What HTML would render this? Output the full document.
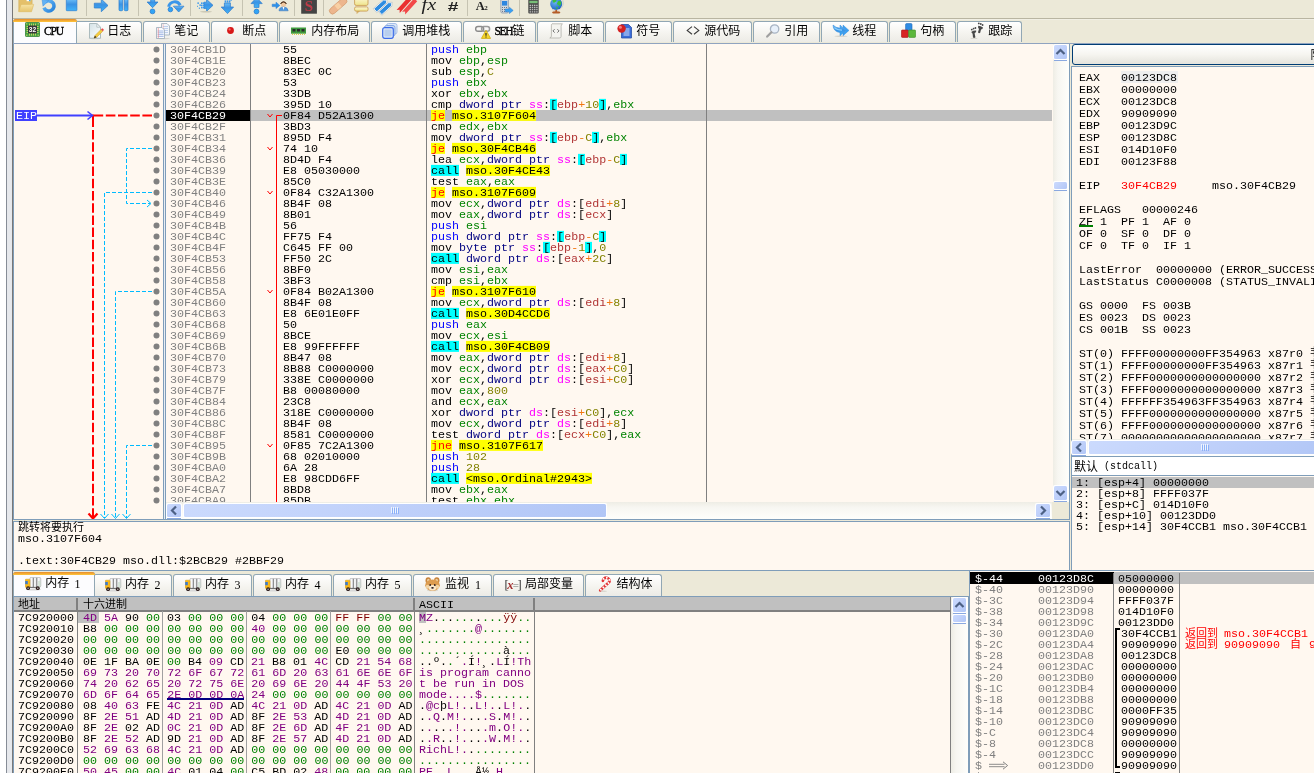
<!DOCTYPE html>
<html><head><meta charset="utf-8"><title>x32dbg</title>
<style>
html,body{margin:0;padding:0}
body{width:1314px;height:773px;overflow:hidden;position:relative;background:#ECE9D8;will-change:transform;font-family:"Liberation Sans",sans-serif}
div,svg.a,span.a{position:absolute;box-sizing:border-box}
.m{font:10px/10px "Liberation Mono",monospace;white-space:pre;transform-origin:0 0;transform:scale(1.16667,1.123);height:10px;color:#000}
.m span{position:static}
.r{}
.ui{font:10px/12px "Liberation Mono",monospace;white-space:pre;color:#000}
.cj{font:12px/12px "Liberation Sans","Noto Sans CJK SC",sans-serif;white-space:pre;color:#000}
.clip{overflow:hidden}
.g{color:#808080}
.tab{border:1px solid #91A7B4;border-bottom:none;border-radius:3px 3px 0 0;background:linear-gradient(#FFFFFF,#F4F3EE 60%,#ECEBE6)}
.tabs{border:1px solid #91A7B4;border-bottom:none;border-radius:3px 3px 0 0;background:#FCFCFE}
.tabs:before{content:"";position:absolute;left:-1px;right:-1px;top:-1px;height:3px;background:linear-gradient(#E68B2C,#FFC73C);border-radius:3px 3px 0 0}
.sb{background:#C4D5FB;border:1px solid #fff;border-radius:2px;box-shadow:inset 0 0 0 1px #B3C8F5, 0 1px 0 #9DB3E5}
.tv{background:linear-gradient(90deg,#EEEDE5,#F7F6F1 30%,#FEFEFB)}
.th{background:linear-gradient(#EEEDE5,#F7F6F1 30%,#FEFEFB)}
/* token colours */
.pp{color:#00F}.cl,.jc,.ad,.sk{background-repeat:no-repeat;background-size:100% 9.8px}.cl{background-image:linear-gradient(#0FF,#0FF)}.jc{color:#F00;background-image:linear-gradient(#FF0,#FF0)}.ad{background-image:linear-gradient(#FF0,#FF0)}
.rg{color:#008300}.vl{color:#828200}.sz{color:#000080}.sg{color:#F0F}
.sk{background-image:linear-gradient(#0FF,#0FF)}.mb{color:#B03434}.op{color:#F27711}
.z{color:#008000}.p{color:#800080}.f{color:#800000}
</style></head><body>
<div style="left:0px;top:0px;width:6px;height:773px;background:#FFFFFF"></div><div style="left:6px;top:0px;width:1px;height:773px;background:#868C96"></div><div style="left:7px;top:0px;width:5px;height:773px;background:#E6E8EC"></div><div style="left:12px;top:0px;width:1px;height:773px;background:#787878"></div><div style="left:13px;top:18px;width:1301px;height:1px;background:#B9B5A2"></div><div style="left:13px;top:19px;width:1301px;height:1px;background:#F1EFE4"></div><div style="left:86px;top:0px;width:1px;height:16px;background:#C6C3B2"></div><div style="left:138px;top:0px;width:1px;height:16px;background:#C6C3B2"></div><div style="left:190px;top:0px;width:1px;height:16px;background:#C6C3B2"></div><div style="left:242px;top:0px;width:1px;height:16px;background:#C6C3B2"></div><div style="left:294px;top:0px;width:1px;height:16px;background:#C6C3B2"></div><div style="left:323px;top:0px;width:1px;height:16px;background:#C6C3B2"></div><div style="left:467px;top:0px;width:1px;height:16px;background:#C6C3B2"></div><div style="left:519px;top:0px;width:1px;height:16px;background:#C6C3B2"></div><svg class="a" style="left:0;top:0" width="600" height="18" viewBox="0 0 600 18"><defs><linearGradient id="bg1" x1="0" y1="0" x2="0" y2="1"><stop offset="0" stop-color="#6EC0F8"/><stop offset=".45" stop-color="#3A92E4"/><stop offset="1" stop-color="#40B4FA"/></linearGradient><linearGradient id="bg2" x1="0" y1="0" x2="1" y2="1"><stop offset="0" stop-color="#6CBCF8"/><stop offset="1" stop-color="#2480DA"/></linearGradient><linearGradient id="fo" x1="0" y1="0" x2="0" y2="1"><stop offset="0" stop-color="#F6E3A4"/><stop offset="1" stop-color="#E6C46C"/></linearGradient><linearGradient id="cm" x1="0" y1="0" x2="0" y2="1"><stop offset="0" stop-color="#FDF8D8"/><stop offset="1" stop-color="#EFE48C"/></linearGradient><radialGradient id="gl" cx=".4" cy=".35" r=".7"><stop offset="0" stop-color="#6CB6F4"/><stop offset="1" stop-color="#1860C0"/></radialGradient></defs><path d="M18.8 11.6V-1h6.6l1.2-1.6h4.6l.9 1.2V4" fill="#E4C06A" stroke="#D2AC58" stroke-width=".6"/><rect x="26.6" y="-.2" width="3.6" height="1.4" fill="#fff"/><rect x="29" y="0" width="1.4" height="1.2" fill="#48B0E8"/><path d="M18.8 11.7L21 4.4h12.7l-2.2 7.3z" fill="url(#fo)" stroke="#DDBA62" stroke-width=".6"/><path d="M45.4 2.2A5.1 5.1 0 1 1 44 7.6" fill="none" stroke="url(#bg2)" stroke-width="3.5"/><path d="M42 -.8L48.8 .4 43 6.2z" fill="#62B2F4" stroke="#3A8CE0" stroke-width=".5"/><rect x="66.3" y="-1" width="10.6" height="11.7" rx=".6" fill="url(#bg1)" stroke="#2C7ED2" stroke-width=".7"/><path d="M94.3 3.2h7V-.9l6.7 6.4-6.7 6.2V8h-7z" fill="url(#bg1)" stroke="#2A78CC" stroke-width=".7"/><rect x="119" y="-1" width="3.7" height="11.7" rx="1" fill="url(#bg1)" stroke="#2A78CC" stroke-width=".7"/><rect x="124.3" y="-1" width="3.7" height="11.7" rx="1" fill="url(#bg1)" stroke="#2A78CC" stroke-width=".7"/><path d="M150.7 -2h4v4h3.3L152.6 7.7 147.1 2h3.6z" fill="url(#bg1)" stroke="#2A78CC" stroke-width=".7"/><circle cx="152.5" cy="11.4" r="2.4" fill="#30A4F6" stroke="#2A7CD0" stroke-width=".8"/><path d="M168.6 6.8a6.2 6.2 0 0 1 11.6-1.6" fill="none" stroke="#3A96EA" stroke-width="3"/><path d="M173.4 6.2h10.6l-5.3 5.8z" fill="url(#bg1)" stroke="#2A78CC" stroke-width=".7"/><circle cx="170.4" cy="9.5" r="2.3" fill="#30A4F6" stroke="#2A7CD0" stroke-width=".8"/><path d="M204 2.2h2.6V-.6l6.4 5.9-6.4 6V8.4H204z" fill="url(#bg1)" stroke="#2A78CC" stroke-width=".7"/><g fill="#3C98EC"><rect x="197.4" y="2.4" width="1.5" height="1.5"/><rect x="199.4" y="4.4" width="1.5" height="1.5"/><rect x="197" y="5.8" width="1" height="1"/><rect x="198.8" y="7.6" width="1.2" height="1.2"/><rect x="201" y="2.4" width="1.6" height="1.6"/><rect x="203" y="2.4" width="1.6" height="1.6"/><rect x="201" y="4.6" width="1.6" height="1.6"/><rect x="203" y="4.6" width="1.6" height="1.6"/><rect x="201" y="6.8" width="1.6" height="1.6"/><rect x="203" y="6.8" width="1.6" height="1.6"/></g><ellipse cx="206" cy="11.8" rx="6" ry=".8" fill="#C9C5B2"/><path d="M224.4 3h6v4h3.2l-6.1 6.6L221.2 7h3.2z" fill="url(#bg1)" stroke="#2A78CC" stroke-width=".7"/><g fill="#3C98EC"><rect x="224.6" y="-1" width="1.6" height="1.6"/><rect x="226.7" y="-1" width="1.6" height="1.6"/><rect x="228.8" y="-1" width="1.6" height="1.6"/><rect x="224.6" y="1" width="1.6" height="1.6"/><rect x="226.7" y="1" width="1.6" height="1.6"/><rect x="228.8" y="1" width="1.6" height="1.6"/><rect x="230.6" y="0" width="1" height="1"/></g><path d="M251 3.6L256.6 -2.4 262.2 3.6H259v3.8h-4.8V3.6z" fill="url(#bg1)" stroke="#2A78CC" stroke-width=".7"/><circle cx="256.5" cy="11.5" r="2.4" fill="#30A4F6" stroke="#2A7CD0" stroke-width=".8"/><path d="M272.2 4.2h3.8V2.2l3.8 3.2-3.8 3.2V6.6h-3.8z" fill="#2E92EA" stroke="#2A78CC" stroke-width=".5"/><circle cx="283.5" cy="4.2" r="2.6" fill="#F0C8A0"/><path d="M280.7 4a2.9 2.9 0 0 1 5.6 0q-.6-2-2.8-2t-2.8 2z" fill="#4A2E1A" stroke="#4A2E1A" stroke-width=".8"/><path d="M279 10.8q.2-3.8 4.5-3.8t4.7 3.8z" fill="#4C96E0" stroke="#3070B8" stroke-width=".5"/><path d="M282.6 7h1.8l-.9 3z" fill="#fff"/><rect x="301.2" y="-2" width="15.7" height="15.7" fill="#444"/><text x="309" y="10.6" text-anchor="middle" font-family='Liberation Serif' font-weight="bold" font-size="15" fill="#BC3C48">S</text><g transform="rotate(-41 338 6)"><rect x="327.6" y="3" width="21" height="6.2" rx="3.1" fill="#EDB68E" stroke="#D29A6E" stroke-width=".7"/><rect x="335.6" y="3.4" width="4.8" height="5.4" fill="#F8D0A4"/></g><rect x="354.6" y="-3" width="13.4" height="8.4" rx="1.6" fill="url(#cm)" stroke="#C8964A" stroke-width=".8"/><path d="M357 11V13.4L359.4 11z" fill="#F4EAA0" stroke="#C8964A" stroke-width=".7"/><rect x="354.6" y="6.9" width="13.4" height="4.2" rx="1.4" fill="url(#cm)" stroke="#C8964A" stroke-width=".8"/><g transform="rotate(-42 384 6)" stroke="#fff" stroke-width=".9" fill="#2E8CE0"><path d="M374.6 1.2h13l2.4 2.2-2.4 2.2h-13z"/><path d="M376.6 6.6h13l2.4 2.2-2.4 2.2h-13z"/></g><g transform="rotate(-42 384 6)" fill="none" stroke="#9AA8B4" stroke-width=".4"><path d="M374.2 .8h13.6l2.8 2.6-2.8 2.6h-13.6z"/><path d="M376.2 6.2h13.6l2.8 2.6-2.8 2.6h-13.6z"/></g><g transform="rotate(-48 407 6)" fill="#EA3030"><path d="M397 1h18.4v4.2H397l2.2-2.1z"/><path d="M399.4 6.2h18v4.2h-18l2.2-2.1z" fill="#F24848"/></g><text x="421.6" y="10" font-family='Liberation Serif' font-style="italic" font-size="16.5" fill="#202020" textLength="14.6" lengthAdjust="spacingAndGlyphs">fx</text><text x="447.6" y="10.8" font-family="Liberation Sans" font-style="italic" font-weight="bold" font-size="13.5" fill="#202020" textLength="10.6" lengthAdjust="spacingAndGlyphs">#</text><text x="475.8" y="10" font-family='Liberation Serif' font-weight="bold" font-size="12.5" fill="#202020">A</text><text x="484.2" y="10" font-family='Liberation Serif' font-weight="bold" font-size="7" fill="#202020">2</text><rect x="500.8" y="-2" width="7.6" height="15" rx="1.4" fill="#D4D8DE" stroke="#8E98A8" stroke-width=".8"/><rect x="502" y="1" width="5.2" height="4.6" fill="#2E86E0"/><path d="M502 7.5h5M502 9.5h5M502 11.4h5" stroke="#6A7484" stroke-width="1" stroke-dasharray="1 1"/><path d="M505.2 9h4.2V7.2l3.8 3.2-3.8 3.2v-1.8h-4.2z" fill="#38A0F4" stroke="#2A78CC" stroke-width=".5"/><rect x="528.3" y="-1" width="10.4" height="14.5" rx="1" fill="#484848"/><rect x="529.4" y=".8" width="8.2" height="2.4" fill="#78BE78"/><path d="M529.6 5.3h8M529.6 7.5h8M529.6 9.7h8M529.6 11.9h8" stroke="#BEBEBE" stroke-width="1.3" stroke-dasharray="1.4 .8"/><circle cx="556.2" cy="4" r="6" fill="url(#gl)"/><path d="M552.6 .2q1.6-1.4 3.4-.8l.6 1.6-1.8 1.4-1.8 .2zM558 1.2l2.2-.4 1.2 1.8-.6 2.2-1.4 1.4-1-1.4-1.6-.6zM556.4 6.6l1.4 .6-.4 1.6-1 .2z" fill="#3CC03C"/><path d="M561.6 -1.6a7.4 7.4 0 0 1-9.6 11" fill="none" stroke="#C8C8C8" stroke-width=".9"/><ellipse cx="556.2" cy="12.4" rx="4.1" ry="1.2" fill="#B45C28"/><rect x="555.4" y="10" width="1.6" height="2" fill="#B45C28"/></svg><div class="tab" style="left:74px;top:21px;width:68px;height:21px;"></div><div class="cj" style="left:107.3px;top:24.8px">日志</div><div class="tab" style="left:143px;top:21px;width:67px;height:21px;"></div><div class="cj" style="left:174.3px;top:24.8px">笔记</div><div class="tab" style="left:211px;top:21px;width:67px;height:21px;"></div><div class="cj" style="left:242.3px;top:24.8px">断点</div><div class="tab" style="left:279px;top:21px;width:91px;height:21px;"></div><div class="cj" style="left:311.3px;top:24.8px">内存布局</div><div class="tab" style="left:371px;top:21px;width:91px;height:21px;"></div><div class="cj" style="left:402.3px;top:24.8px">调用堆栈</div><div class="tab" style="left:463px;top:21px;width:73px;height:21px;"></div><div class="tab" style="left:537px;top:21px;width:67px;height:21px;"></div><div class="cj" style="left:568.3px;top:24.8px">脚本</div><div class="tab" style="left:605px;top:21px;width:67px;height:21px;"></div><div class="cj" style="left:636.3px;top:24.8px">符号</div><div class="tab" style="left:673px;top:21px;width:79px;height:21px;"></div><div class="cj" style="left:704.3px;top:24.8px">源代码</div><div class="tab" style="left:753px;top:21px;width:67px;height:21px;"></div><div class="cj" style="left:784.3px;top:24.8px">引用</div><div class="tab" style="left:821px;top:21px;width:67px;height:21px;"></div><div class="cj" style="left:852.3px;top:24.8px">线程</div><div class="tab" style="left:889px;top:21px;width:67px;height:21px;"></div><div class="cj" style="left:920.3px;top:24.8px">句柄</div><div class="tab" style="left:957px;top:21px;width:65px;height:21px;"></div><div class="cj" style="left:988.3px;top:24.8px">跟踪</div><div class="tabs" style="left:13px;top:19px;width:64px;height:24px;"></div><div class="ui" style="left:44px;top:25px;font:11.5px/12px 'Liberation Serif',serif;letter-spacing:-1.1px;transform:scaleY(1.12);transform-origin:0 50%;-webkit-text-stroke:.35px #000">CPU</div><div class="ui" style="left:494.5px;top:25px;font:11.5px/12px 'Liberation Serif',serif;letter-spacing:-1.3px;transform:scaleY(1.12);transform-origin:0 50%;-webkit-text-stroke:.35px #000">SEH</div><div class="cj" style="left:512.5px;top:24.8px">链</div><svg class="a" style="left:686px;top:26px" width="14" height="9" viewBox="0 0 14 9"><path d="M6 .6L1.2 4.4 6 8.2M8 .6l4.8 3.8L8 8.2" fill="none" stroke="#3A3A3A" stroke-width="1.1"/></svg><svg class="a" style="left:25px;top:22px" width="15" height="15" viewBox="0 0 15 15"><rect x=".4" y=".4" width="14.2" height="14.2" rx="1.2" fill="#43A443" stroke="#2F7E2F" stroke-width=".8"/><path d="M1.600 4.500h12M1.600 6.500h12M1.600 8.500h12M1.600 10.500h12M4.500 1.600v12M6.500 1.600v12M8.500 1.600v12M10.500 1.600v12" stroke="#E8DC70" stroke-width=".8"/><circle cx="1.800" cy="1.800" r=".6" fill="#E8DC70"/><circle cx="13.200" cy="1.800" r=".6" fill="#E8DC70"/><circle cx="1.800" cy="13.200" r=".6" fill="#E8DC70"/><circle cx="13.200" cy="13.200" r=".6" fill="#E8DC70"/><rect x="3" y="3.400" width="9" height="8" rx=".6" fill="#383838"/><text x="7.5" y="10.2" text-anchor="middle" font-family="Liberation Sans" font-weight="bold" font-size="6.6" fill="#fff">32</text></svg><svg class="a" style="left:88px;top:23px" width="17" height="17" viewBox="0 0 17 17"><defs><linearGradient id="pg" x1="0" y1="0" x2="1" y2="1"><stop offset="0" stop-color="#D4E2E6"/><stop offset="1" stop-color="#FCFEFE"/></linearGradient></defs><ellipse cx="7" cy="15.600" rx="6.500" ry=".7" fill="#D6D4CC"/><path d="M1.500.5h7.300l3.700 3.700v11h-11z" fill="url(#pg)" stroke="#A4B4B8" stroke-width=".9"/><path d="M8.800.5v3.700h3.700z" fill="#F4F8F8" stroke="#A4B4B8" stroke-width=".7"/><path d="M6 15.200l1-2.800 6-6 1.800 1.800-6 6z" fill="#F4CC40" stroke="#B89020" stroke-width=".4"/><path d="M13 6.400l1.800 1.800 .9-.9q.3-.5-.2-1l-.7-.7q-.5-.4-.9 0z" fill="#E84848"/><path d="M6 15.200l.9-2.500 1.600 1.600z" fill="#2A2018"/></svg><svg class="a" style="left:155px;top:23px" width="17" height="17" viewBox="0 0 17 17"><ellipse cx="8" cy="15.600" rx="7" ry=".7" fill="#D6D4CC"/><path d="M6.500.5h5.500l2.500 2.500v9h-8z" fill="#F2F6FA" stroke="#9AAAB8" stroke-width=".8"/><path d="M8 3.500h5M8 5.500h5M8 7.500h5M8 9.500h5" stroke="#A8BEE6" stroke-width=".7"/><path d="M8.200 1v11" stroke="#F0A8A8" stroke-width=".6"/><path d="M1.500 4.500h5.500l2.500 2.500v8.500h-8z" fill="#FAFCFE" stroke="#9AAAB8" stroke-width=".8"/><path d="M2.600 8h6M2.600 9.800h6M2.600 11.600h6M2.600 13.400h6" stroke="#8EA8E0" stroke-width=".8"/><path d="M3.300 5v10" stroke="#EE8C8C" stroke-width=".7"/></svg><svg class="a" style="left:227px;top:27px" width="7" height="7" viewBox="0 0 7 7"><circle cx="3.5" cy="3.5" r="3.4" fill="#D81818"/><circle cx="2.6" cy="2.4" r="1.1" fill="#F07070"/></svg><svg class="a" style="left:291px;top:27px" width="15" height="8" viewBox="0 0 15 8"><rect x="0" y=".5" width="15" height="6.2" fill="#3E9A3E"/><path d="M1.5 2h3v2.6h-3zM6 2h3v2.6h-3zM10.500 2h3v2.6h-3z" fill="#2A2A2A"/><path d="M1 7.4h13" stroke="#D8C850" stroke-width="1.2" stroke-dasharray="1 1"/></svg><svg class="a" style="left:382px;top:23px" width="16" height="16" viewBox="0 0 16 16"><rect x="4.5" y=".5" width="10.5" height="10.5" rx="2" fill="#DCE8F8" stroke="#A8C0E8"/><rect x="2.5" y="2.5" width="10.5" height="10.5" rx="2" fill="#C8DAF4" stroke="#86A8E4"/><rect x=".7" y="4.7" width="10.6" height="10.6" rx="2" fill="#DCE8F8" stroke="#3C6CE8" stroke-width="1.2"/><rect x="2.4" y="6.4" width="7.2" height="7.2" rx="1" fill="#B8CEEE"/></svg><svg class="a" style="left:475px;top:25px" width="16" height="14" viewBox="0 0 16 14"><rect x=".6" y="1.6" width="8" height="4.6" rx="2.3" fill="none" stroke="#8A8A8A" stroke-width="1.5"/><rect x="6.6" y="1.6" width="8" height="4.6" rx="2.3" fill="none" stroke="#9A9A9A" stroke-width="1.5"/><path d="M11 5.2l4.6 8.2H6.4z" fill="#F5D52A" stroke="#C8A400" stroke-width=".7"/><path d="M11 8v2.8M11 11.6v1" stroke="#222" stroke-width="1.1"/></svg><svg class="a" style="left:549px;top:23px" width="15" height="16" viewBox="0 0 15 16"><path d="M3 .8h10.5q-1.4 1-1.4 2.4v10.2q0 1.6-1.8 1.6H.8q1.6-.6 1.6-2V2.2Q2.4 1 3 .8z" fill="#F4F4F0" stroke="#B0B0A8" stroke-width=".8"/><path d="M5.6 6.2L4 7.9l1.6 1.7M8.4 6.2L10 7.9 8.4 9.6" fill="none" stroke="#606060" stroke-width=".9"/></svg><svg class="a" style="left:617px;top:23px" width="16" height="16" viewBox="0 0 16 16"><path d="M4.5 1.5h7l3 3v10.5h-10z" fill="#3A6CD8" stroke="#2A50A8" stroke-width=".8"/><path d="M6.5 6h6M6.5 8h6M6.5 10h6M6.5 12h6" stroke="#E8F0FF" stroke-width=".9"/><circle cx="4.6" cy="5.6" r="4.2" fill="#D42020"/><circle cx="3.4" cy="4.2" r="1.5" fill="#F08080"/></svg><svg class="a" style="left:766px;top:24px" width="14" height="14" viewBox="0 0 14 14"><circle cx="8.6" cy="5" r="4.2" fill="#E8F0FA" stroke="#A8B4C4" stroke-width="1.3"/><path d="M5.4 8.2L1.2 12.6" stroke="#A0A0A0" stroke-width="2.2" stroke-linecap="round"/></svg><svg class="a" style="left:832px;top:23px" width="18" height="15" viewBox="0 0 18 15"><ellipse cx="9" cy="13.3" rx="6.6" ry=".8" fill="#D6D4CC"/><path d="M1 2Q1.2 8.6 8 9.6V12.8L13.8 7.4 8 2V5.2Q3.8 5 1 2z" fill="url(#bg1)" stroke="#2C86DC" stroke-width=".5"/><path d="M11 2l6 5.4-6 5.4V10.2l3-2.8-3-2.8z" fill="#3AA0F2" stroke="#2C86DC" stroke-width=".4"/><path d="M2.4 4.6Q5 7.2 10 7.2" fill="none" stroke="#8CD0FC" stroke-width="1.2"/></svg><svg class="a" style="left:901px;top:23px" width="15" height="15" viewBox="0 0 15 15"><rect x="4.6" y=".6" width="6.4" height="7" rx="1" fill="#2F8CE4" stroke="#1C68B8" stroke-width=".6"/><rect x=".4" y="7" width="7" height="7.4" rx="1" fill="#D82424" stroke="#A01818" stroke-width=".6"/><rect x="7.6" y="7" width="7" height="7.4" rx="1" fill="#5CB83C" stroke="#3E8C26" stroke-width=".6"/></svg><svg class="a" style="left:970px;top:22px" width="14" height="17" viewBox="0 0 14 17"><g fill="#484848"><circle cx="1.8" cy="7.6" r=".9"/><circle cx="3.6" cy="6.6" r=".9"/><circle cx="5.4" cy="6" r=".9"/><path d="M1.2 10q2.4-1.8 5-1.4.6 1.8-1.6 2.6l.8 4q-1 1.6-2.4.2l-.4-3.600z"/><circle cx="8.8" cy="1.400" r=".9"/><circle cx="10.800" cy="2" r=".9"/><circle cx="12.600" cy="3" r=".9"/><path d="M8.200 3.800q2.600 0 4.800 1.600-.2 2-2 2l-.8 3.400q-1.400 1-2.200-.6l1-3.200q-1.400-1-.8-3.200z"/></g><ellipse cx="4" cy="16.400" rx="3.600" ry=".6" fill="#D8D6CE"/></svg><div style="left:13px;top:43px;width:1301px;height:1px;background:#8FA3C0"></div><div style="left:13px;top:44px;width:1057px;height:476px;background:#FFF8F0;border:1px solid #7F9DB9;border-top:none"></div><div style="left:163px;top:44px;width:1px;height:475px;background:#7F9DB9"></div><div style="left:164px;top:44px;width:1px;height:475px;background:#E8EEF4"></div><div style="left:165px;top:44px;width:1px;height:475px;background:#7F9DB9"></div><div style="left:251px;top:110px;width:801px;height:11px;background:#C0C0C0"></div><div style="left:166px;top:110px;width:84px;height:11px;background:#000"></div><div style="left:250px;top:44px;width:1px;height:458px;background:#808080"></div><div style="left:426px;top:44px;width:1px;height:458px;background:#808080"></div><div style="left:706px;top:44px;width:1px;height:458px;background:#808080"></div><div class="clip" style="left:166px;top:44px;width:886px;height:458px"><div class="m" style="left:4px;top:0.8px;color:#808080">30F4CB1D</div><div class="m" style="left:117px;top:0.8px;">55</div><div class="m" style="left:265px;top:0.8px;"><span class="pp">push</span> <span class="rg">ebp</span></div><div class="m" style="left:4px;top:11.8px;color:#808080">30F4CB1E</div><div class="m" style="left:117px;top:11.8px;">8BEC</div><div class="m" style="left:265px;top:11.8px;">mov <span class="rg">ebp</span>,<span class="rg">esp</span></div><div class="m" style="left:4px;top:22.8px;color:#808080">30F4CB20</div><div class="m" style="left:117px;top:22.8px;">83EC 0C</div><div class="m" style="left:265px;top:22.8px;">sub <span class="rg">esp</span>,<span class="vl">C</span></div><div class="m" style="left:4px;top:33.8px;color:#808080">30F4CB23</div><div class="m" style="left:117px;top:33.8px;">53</div><div class="m" style="left:265px;top:33.8px;"><span class="pp">push</span> <span class="rg">ebx</span></div><div class="m" style="left:4px;top:44.8px;color:#808080">30F4CB24</div><div class="m" style="left:117px;top:44.8px;">33DB</div><div class="m" style="left:265px;top:44.8px;">xor <span class="rg">ebx</span>,<span class="rg">ebx</span></div><div class="m" style="left:4px;top:55.8px;color:#808080">30F4CB26</div><div class="m" style="left:117px;top:55.8px;">395D 10</div><div class="m" style="left:265px;top:55.8px;">cmp <span class="sz">dword ptr</span> <span class="sg">ss</span>:<span class="sk">[</span><span class="mb">ebp</span><span class="op">+</span><span class="vl">10</span><span class="sk">]</span>,<span class="rg">ebx</span></div><div class="m" style="left:4px;top:66.8px;color:#fff">30F4CB29</div><div class="m" style="left:117px;top:66.8px;">0F84 D52A1300</div><div class="m" style="left:265px;top:66.8px;"><span class="jc">je</span> <span class="ad">mso.3107F604</span></div><div class="m" style="left:4px;top:77.8px;color:#808080">30F4CB2F</div><div class="m" style="left:117px;top:77.8px;">3BD3</div><div class="m" style="left:265px;top:77.8px;">cmp <span class="rg">edx</span>,<span class="rg">ebx</span></div><div class="m" style="left:4px;top:88.8px;color:#808080">30F4CB31</div><div class="m" style="left:117px;top:88.8px;">895D F4</div><div class="m" style="left:265px;top:88.8px;">mov <span class="sz">dword ptr</span> <span class="sg">ss</span>:<span class="sk">[</span><span class="mb">ebp</span><span class="op">-</span><span class="vl">C</span><span class="sk">]</span>,<span class="rg">ebx</span></div><div class="m" style="left:4px;top:99.8px;color:#808080">30F4CB34</div><div class="m" style="left:117px;top:99.8px;">74 10</div><div class="m" style="left:265px;top:99.8px;"><span class="jc">je</span> <span class="ad">mso.30F4CB46</span></div><div class="m" style="left:4px;top:110.8px;color:#808080">30F4CB36</div><div class="m" style="left:117px;top:110.8px;">8D4D F4</div><div class="m" style="left:265px;top:110.8px;">lea <span class="rg">ecx</span>,<span class="sz">dword ptr</span> <span class="sg">ss</span>:<span class="sk">[</span><span class="mb">ebp</span><span class="op">-</span><span class="vl">C</span><span class="sk">]</span></div><div class="m" style="left:4px;top:121.8px;color:#808080">30F4CB39</div><div class="m" style="left:117px;top:121.8px;">E8 05030000</div><div class="m" style="left:265px;top:121.8px;"><span class="cl">call</span> <span class="ad">mso.30F4CE43</span></div><div class="m" style="left:4px;top:132.8px;color:#808080">30F4CB3E</div><div class="m" style="left:117px;top:132.8px;">85C0</div><div class="m" style="left:265px;top:132.8px;">test <span class="rg">eax</span>,<span class="rg">eax</span></div><div class="m" style="left:4px;top:143.8px;color:#808080">30F4CB40</div><div class="m" style="left:117px;top:143.8px;">0F84 C32A1300</div><div class="m" style="left:265px;top:143.8px;"><span class="jc">je</span> <span class="ad">mso.3107F609</span></div><div class="m" style="left:4px;top:154.8px;color:#808080">30F4CB46</div><div class="m" style="left:117px;top:154.8px;">8B4F 08</div><div class="m" style="left:265px;top:154.8px;">mov <span class="rg">ecx</span>,<span class="sz">dword ptr</span> <span class="sg">ds</span>:[<span class="mb">edi</span><span class="op">+</span><span class="vl">8</span>]</div><div class="m" style="left:4px;top:165.8px;color:#808080">30F4CB49</div><div class="m" style="left:117px;top:165.8px;">8B01</div><div class="m" style="left:265px;top:165.8px;">mov <span class="rg">eax</span>,<span class="sz">dword ptr</span> <span class="sg">ds</span>:[<span class="mb">ecx</span>]</div><div class="m" style="left:4px;top:176.8px;color:#808080">30F4CB4B</div><div class="m" style="left:117px;top:176.8px;">56</div><div class="m" style="left:265px;top:176.8px;"><span class="pp">push</span> <span class="rg">esi</span></div><div class="m" style="left:4px;top:187.8px;color:#808080">30F4CB4C</div><div class="m" style="left:117px;top:187.8px;">FF75 F4</div><div class="m" style="left:265px;top:187.8px;"><span class="pp">push</span> <span class="sz">dword ptr</span> <span class="sg">ss</span>:<span class="sk">[</span><span class="mb">ebp</span><span class="op">-</span><span class="vl">C</span><span class="sk">]</span></div><div class="m" style="left:4px;top:198.8px;color:#808080">30F4CB4F</div><div class="m" style="left:117px;top:198.8px;">C645 FF 00</div><div class="m" style="left:265px;top:198.8px;">mov <span class="sz">byte ptr</span> <span class="sg">ss</span>:<span class="sk">[</span><span class="mb">ebp</span><span class="op">-</span><span class="vl">1</span><span class="sk">]</span>,<span class="vl">0</span></div><div class="m" style="left:4px;top:209.8px;color:#808080">30F4CB53</div><div class="m" style="left:117px;top:209.8px;">FF50 2C</div><div class="m" style="left:265px;top:209.8px;"><span class="cl">call</span> <span class="sz">dword ptr</span> <span class="sg">ds</span>:[<span class="mb">eax</span><span class="op">+</span><span class="vl">2C</span>]</div><div class="m" style="left:4px;top:220.8px;color:#808080">30F4CB56</div><div class="m" style="left:117px;top:220.8px;">8BF0</div><div class="m" style="left:265px;top:220.8px;">mov <span class="rg">esi</span>,<span class="rg">eax</span></div><div class="m" style="left:4px;top:231.8px;color:#808080">30F4CB58</div><div class="m" style="left:117px;top:231.8px;">3BF3</div><div class="m" style="left:265px;top:231.8px;">cmp <span class="rg">esi</span>,<span class="rg">ebx</span></div><div class="m" style="left:4px;top:242.8px;color:#808080">30F4CB5A</div><div class="m" style="left:117px;top:242.8px;">0F84 B02A1300</div><div class="m" style="left:265px;top:242.8px;"><span class="jc">je</span> <span class="ad">mso.3107F610</span></div><div class="m" style="left:4px;top:253.8px;color:#808080">30F4CB60</div><div class="m" style="left:117px;top:253.8px;">8B4F 08</div><div class="m" style="left:265px;top:253.8px;">mov <span class="rg">ecx</span>,<span class="sz">dword ptr</span> <span class="sg">ds</span>:[<span class="mb">edi</span><span class="op">+</span><span class="vl">8</span>]</div><div class="m" style="left:4px;top:264.8px;color:#808080">30F4CB63</div><div class="m" style="left:117px;top:264.8px;">E8 6E01E0FF</div><div class="m" style="left:265px;top:264.8px;"><span class="cl">call</span> <span class="ad">mso.30D4CCD6</span></div><div class="m" style="left:4px;top:275.8px;color:#808080">30F4CB68</div><div class="m" style="left:117px;top:275.8px;">50</div><div class="m" style="left:265px;top:275.8px;"><span class="pp">push</span> <span class="rg">eax</span></div><div class="m" style="left:4px;top:286.8px;color:#808080">30F4CB69</div><div class="m" style="left:117px;top:286.8px;">8BCE</div><div class="m" style="left:265px;top:286.8px;">mov <span class="rg">ecx</span>,<span class="rg">esi</span></div><div class="m" style="left:4px;top:297.8px;color:#808080">30F4CB6B</div><div class="m" style="left:117px;top:297.8px;">E8 99FFFFFF</div><div class="m" style="left:265px;top:297.8px;"><span class="cl">call</span> <span class="ad">mso.30F4CB09</span></div><div class="m" style="left:4px;top:308.8px;color:#808080">30F4CB70</div><div class="m" style="left:117px;top:308.8px;">8B47 08</div><div class="m" style="left:265px;top:308.8px;">mov <span class="rg">eax</span>,<span class="sz">dword ptr</span> <span class="sg">ds</span>:[<span class="mb">edi</span><span class="op">+</span><span class="vl">8</span>]</div><div class="m" style="left:4px;top:319.8px;color:#808080">30F4CB73</div><div class="m" style="left:117px;top:319.8px;">8B88 C0000000</div><div class="m" style="left:265px;top:319.8px;">mov <span class="rg">ecx</span>,<span class="sz">dword ptr</span> <span class="sg">ds</span>:[<span class="mb">eax</span><span class="op">+</span><span class="vl">C0</span>]</div><div class="m" style="left:4px;top:330.8px;color:#808080">30F4CB79</div><div class="m" style="left:117px;top:330.8px;">338E C0000000</div><div class="m" style="left:265px;top:330.8px;">xor <span class="rg">ecx</span>,<span class="sz">dword ptr</span> <span class="sg">ds</span>:[<span class="mb">esi</span><span class="op">+</span><span class="vl">C0</span>]</div><div class="m" style="left:4px;top:341.8px;color:#808080">30F4CB7F</div><div class="m" style="left:117px;top:341.8px;">B8 00080000</div><div class="m" style="left:265px;top:341.8px;">mov <span class="rg">eax</span>,<span class="vl">800</span></div><div class="m" style="left:4px;top:352.8px;color:#808080">30F4CB84</div><div class="m" style="left:117px;top:352.8px;">23C8</div><div class="m" style="left:265px;top:352.8px;">and <span class="rg">ecx</span>,<span class="rg">eax</span></div><div class="m" style="left:4px;top:363.8px;color:#808080">30F4CB86</div><div class="m" style="left:117px;top:363.8px;">318E C0000000</div><div class="m" style="left:265px;top:363.8px;">xor <span class="sz">dword ptr</span> <span class="sg">ds</span>:[<span class="mb">esi</span><span class="op">+</span><span class="vl">C0</span>],<span class="rg">ecx</span></div><div class="m" style="left:4px;top:374.8px;color:#808080">30F4CB8C</div><div class="m" style="left:117px;top:374.8px;">8B4F 08</div><div class="m" style="left:265px;top:374.8px;">mov <span class="rg">ecx</span>,<span class="sz">dword ptr</span> <span class="sg">ds</span>:[<span class="mb">edi</span><span class="op">+</span><span class="vl">8</span>]</div><div class="m" style="left:4px;top:385.8px;color:#808080">30F4CB8F</div><div class="m" style="left:117px;top:385.8px;">8581 C0000000</div><div class="m" style="left:265px;top:385.8px;">test <span class="sz">dword ptr</span> <span class="sg">ds</span>:[<span class="mb">ecx</span><span class="op">+</span><span class="vl">C0</span>],<span class="rg">eax</span></div><div class="m" style="left:4px;top:396.8px;color:#808080">30F4CB95</div><div class="m" style="left:117px;top:396.8px;">0F85 7C2A1300</div><div class="m" style="left:265px;top:396.8px;"><span class="jc">jne</span> <span class="ad">mso.3107F617</span></div><div class="m" style="left:4px;top:407.8px;color:#808080">30F4CB9B</div><div class="m" style="left:117px;top:407.8px;">68 02010000</div><div class="m" style="left:265px;top:407.8px;"><span class="pp">push</span> <span class="vl">102</span></div><div class="m" style="left:4px;top:418.8px;color:#808080">30F4CBA0</div><div class="m" style="left:117px;top:418.8px;">6A 28</div><div class="m" style="left:265px;top:418.8px;"><span class="pp">push</span> <span class="vl">28</span></div><div class="m" style="left:4px;top:429.8px;color:#808080">30F4CBA2</div><div class="m" style="left:117px;top:429.8px;">E8 98CDD6FF</div><div class="m" style="left:265px;top:429.8px;"><span class="cl">call</span> <span class="ad">&lt;mso.Ordinal#2943&gt;</span></div><div class="m" style="left:4px;top:440.8px;color:#808080">30F4CBA7</div><div class="m" style="left:117px;top:440.8px;">8BD8</div><div class="m" style="left:265px;top:440.8px;">mov <span class="rg">ebx</span>,<span class="rg">eax</span></div><div class="m" style="left:4px;top:451.8px;color:#808080">30F4CBA9</div><div class="m" style="left:117px;top:451.8px;">85DB</div><div class="m" style="left:265px;top:451.8px;">test <span class="rg">ebx</span>,<span class="rg">ebx</span></div></div><svg class="a" style="left:251px;top:44px" width="40" height="458" viewBox="0 0 40 458"><path d="M16.500 70.0l2.5 3 2.5-3" fill="none" stroke="#F00" stroke-width="1"/><path d="M16.500 103.0l2.5 3 2.5-3" fill="none" stroke="#F00" stroke-width="1"/><path d="M16.500 147.0l2.5 3 2.5-3" fill="none" stroke="#F00" stroke-width="1"/><path d="M16.500 246.0l2.5 3 2.5-3" fill="none" stroke="#F00" stroke-width="1"/><path d="M16.500 400.0l2.5 3 2.5-3" fill="none" stroke="#F00" stroke-width="1"/><path d="M31 71.5H25.5V458" fill="none" stroke="#F00" stroke-width="1"/></svg><svg class="a" style="left:14px;top:44px" width="149" height="475" viewBox="0 0 149 475"><circle cx="142.5" cy="5.5" r="3" fill="#808080"/><circle cx="142.5" cy="16.5" r="3" fill="#808080"/><circle cx="142.5" cy="27.5" r="3" fill="#808080"/><circle cx="142.5" cy="38.5" r="3" fill="#808080"/><circle cx="142.5" cy="49.5" r="3" fill="#808080"/><circle cx="142.5" cy="60.5" r="3" fill="#808080"/><circle cx="142.5" cy="71.5" r="3" fill="#808080"/><circle cx="142.5" cy="82.5" r="3" fill="#808080"/><circle cx="142.5" cy="93.5" r="3" fill="#808080"/><circle cx="142.5" cy="104.5" r="3" fill="#808080"/><circle cx="142.5" cy="115.5" r="3" fill="#808080"/><circle cx="142.5" cy="126.5" r="3" fill="#808080"/><circle cx="142.5" cy="137.5" r="3" fill="#808080"/><circle cx="142.5" cy="148.5" r="3" fill="#808080"/><circle cx="142.5" cy="159.5" r="3" fill="#808080"/><circle cx="142.5" cy="170.5" r="3" fill="#808080"/><circle cx="142.5" cy="181.5" r="3" fill="#808080"/><circle cx="142.5" cy="192.5" r="3" fill="#808080"/><circle cx="142.5" cy="203.5" r="3" fill="#808080"/><circle cx="142.5" cy="214.5" r="3" fill="#808080"/><circle cx="142.5" cy="225.5" r="3" fill="#808080"/><circle cx="142.5" cy="236.5" r="3" fill="#808080"/><circle cx="142.5" cy="247.5" r="3" fill="#808080"/><circle cx="142.5" cy="258.5" r="3" fill="#808080"/><circle cx="142.5" cy="269.5" r="3" fill="#808080"/><circle cx="142.5" cy="280.5" r="3" fill="#808080"/><circle cx="142.5" cy="291.5" r="3" fill="#808080"/><circle cx="142.5" cy="302.5" r="3" fill="#808080"/><circle cx="142.5" cy="313.5" r="3" fill="#808080"/><circle cx="142.5" cy="324.5" r="3" fill="#808080"/><circle cx="142.5" cy="335.5" r="3" fill="#808080"/><circle cx="142.5" cy="346.5" r="3" fill="#808080"/><circle cx="142.5" cy="357.5" r="3" fill="#808080"/><circle cx="142.5" cy="368.5" r="3" fill="#808080"/><circle cx="142.5" cy="379.5" r="3" fill="#808080"/><circle cx="142.5" cy="390.5" r="3" fill="#808080"/><circle cx="142.5" cy="401.5" r="3" fill="#808080"/><circle cx="142.5" cy="412.5" r="3" fill="#808080"/><circle cx="142.5" cy="423.5" r="3" fill="#808080"/><circle cx="142.5" cy="434.5" r="3" fill="#808080"/><circle cx="142.5" cy="445.5" r="3" fill="#808080"/><circle cx="142.5" cy="456.5" r="3" fill="#808080"/><path d="M138 104.5H112.5V159.5H136" fill="none" stroke="#00BBFF" stroke-width="1" stroke-dasharray="4 2"/><path d="M133 156.0L137 159.5L133 163.0" fill="none" stroke="#00BBFF" stroke-width="1"/><path d="M138 148.5H90.5V474" fill="none" stroke="#00BBFF" stroke-width="1" stroke-dasharray="4 2"/><path d="M86.5 470.0L90.5 474.5L94.5 470.0" fill="none" stroke="#00BBFF" stroke-width="1"/><path d="M138 247.5H101.5V474" fill="none" stroke="#00BBFF" stroke-width="1" stroke-dasharray="4 2"/><path d="M97.5 470.0L101.5 474.5L105.5 470.0" fill="none" stroke="#00BBFF" stroke-width="1"/><path d="M138 401.5H112.5V474" fill="none" stroke="#00BBFF" stroke-width="1" stroke-dasharray="4 2"/><path d="M108.5 470.0L112.5 474.5L116.5 470.0" fill="none" stroke="#00BBFF" stroke-width="1"/><path d="M138 71.5H79" fill="none" stroke="#F00" stroke-width="2" stroke-dasharray="9.6 2.6"/><path d="M79 70.5V83" fill="none" stroke="#F00" stroke-width="2"/><path d="M79 86V474" fill="none" stroke="#F00" stroke-width="2" stroke-dasharray="9.5 2.7"/><path d="M74.5 469.5L79 474.5L83.5 469.5" fill="none" stroke="#F00" stroke-width="2.2"/><rect x="1" y="66" width="22" height="11" fill="#4040FF"/><path d="M23 71.5H78" stroke="#4040FF" stroke-width="2"/><path d="M73.5 67.5L78.5 71.5L73.5 75.5" fill="none" stroke="#4040FF" stroke-width="1.6"/></svg><div class="m" style="left:16px;top:110.8px;color:#fff">EIP</div><div class="tv" style="left:1053px;top:44px;width:16px;height:458px;"></div><div style="left:1053px;top:44px;width:15px;height:16px;background:#fff;border-radius:2px"></div><div style="left:1054px;top:60px;width:13px;height:1px;background:#8AA8E0"></div><div style="left:1054px;top:45px;width:13px;height:14px;background:linear-gradient(135deg,#CBDAFD,#BFD0FA 50%,#B1C6F6);border-radius:1.5px"></div><svg class="a" style="left:1054px;top:45px" width="13" height="14"><path d="M2.5 9L6.5 5l4 4" fill="none" stroke="#4D6185" stroke-width="2.2"/></svg><div style="left:1053px;top:485px;width:15px;height:16px;background:#fff;border-radius:2px"></div><div style="left:1054px;top:501px;width:13px;height:1px;background:#8AA8E0"></div><div style="left:1054px;top:486px;width:13px;height:14px;background:linear-gradient(135deg,#CBDAFD,#BFD0FA 50%,#B1C6F6);border-radius:1.5px"></div><svg class="a" style="left:1054px;top:486px" width="13" height="14"><path d="M2.5 5L6.5 9l4-4" fill="none" stroke="#4D6185" stroke-width="2.2"/></svg><div style="left:1053px;top:181px;width:15px;height:9px;background:#fff;border-radius:2px"></div><div style="left:1054px;top:190px;width:13px;height:1px;background:#8AA8E0"></div><div style="left:1054px;top:182px;width:13px;height:7px;background:linear-gradient(135deg,#CBDAFD,#BFD0FA 50%,#B1C6F6);border-radius:1.5px"></div><div class="th" style="left:166px;top:502px;width:886px;height:17px;"></div><div style="left:166px;top:503px;width:16px;height:15px;background:#fff;border-radius:2px"></div><div style="left:167px;top:518px;width:14px;height:1px;background:#8AA8E0"></div><div style="left:167px;top:504px;width:14px;height:13px;background:linear-gradient(135deg,#CBDAFD,#BFD0FA 50%,#B1C6F6);border-radius:1.5px"></div><svg class="a" style="left:167px;top:504px" width="14" height="13"><path d="M9 2.5L5 6.5l4 4" fill="none" stroke="#4D6185" stroke-width="2.2"/></svg><div style="left:1035px;top:503px;width:16px;height:15px;background:#fff;border-radius:2px"></div><div style="left:1036px;top:518px;width:14px;height:1px;background:#8AA8E0"></div><div style="left:1036px;top:504px;width:14px;height:13px;background:linear-gradient(135deg,#CBDAFD,#BFD0FA 50%,#B1C6F6);border-radius:1.5px"></div><svg class="a" style="left:1036px;top:504px" width="14" height="13"><path d="M5 2.5L9 6.5l-4 4" fill="none" stroke="#4D6185" stroke-width="2.2"/></svg><div style="left:183px;top:503px;width:424px;height:15px;background:#fff;border-radius:2px"></div><div style="left:184px;top:504px;width:422px;height:13px;background:linear-gradient(135deg,#CBDAFD,#BFD0FA 50%,#B1C6F6);border-radius:1.5px"></div><div style="left:391px;top:507px;width:1px;height:6px;background:#EEF4FE"></div><div style="left:392px;top:508px;width:1px;height:6px;background:#8CB0F8"></div><div style="left:393px;top:507px;width:1px;height:6px;background:#EEF4FE"></div><div style="left:394px;top:508px;width:1px;height:6px;background:#8CB0F8"></div><div style="left:395px;top:507px;width:1px;height:6px;background:#EEF4FE"></div><div style="left:396px;top:508px;width:1px;height:6px;background:#8CB0F8"></div><div style="left:397px;top:507px;width:1px;height:6px;background:#EEF4FE"></div><div style="left:398px;top:508px;width:1px;height:6px;background:#8CB0F8"></div><div style="left:1052px;top:502px;width:17px;height:17px;background:#ECE9D8"></div><div style="left:13px;top:521px;width:1057px;height:50px;background:#FFF8F0;border:1px solid #7F9DB9"></div><div class="cj" style="left:18px;top:522px;font-size:11px;line-height:11px">跳转将要执行</div><div class="m" style="left:18px;top:533.8px;">mso.3107F604</div><div class="m" style="left:18px;top:555.8px;">.text:30F4CB29 mso.dll:$2BCB29 #2BBF29</div><div style="left:1072px;top:44px;width:260px;height:21px;border:1px solid #003C74;border-radius:3px;background:linear-gradient(#FFFFFF,#F6F5F0 50%,#E4E3DC)"></div><div class="cj" style="left:1310.5px;top:48.5px">隐</div><div style="left:1071px;top:66px;width:260px;height:390px;background:#FFF8F0;border:1px solid #7F9DB9;border-bottom:none"></div><div style="left:1121px;top:71px;width:57px;height:12px;background:#EEEEEE"></div><div class="clip" style="left:1072px;top:67px;width:242px;height:372px"><div class="m r" style="left:7px;top:5.8px;">EAX   00123DC8</div><div class="m r" style="left:7px;top:17.8px;">EBX   00000000</div><div class="m r" style="left:7px;top:29.8px;">ECX   00123DC8</div><div class="m r" style="left:7px;top:41.8px;">EDX   90909090</div><div class="m r" style="left:7px;top:53.8px;">EBP   00123D9C</div><div class="m r" style="left:7px;top:65.8px;">ESP   00123D8C</div><div class="m r" style="left:7px;top:77.8px;">ESI   014D10F0</div><div class="m r" style="left:7px;top:89.8px;">EDI   00123F88</div><div class="m r" style="left:7px;top:113.8px;">EIP   <span style="color:#F00">30F4CB29</span>     mso.30F4CB29</div><div class="m r" style="left:7px;top:137.8px;">EFLAGS   00000246</div><div class="m r" style="left:7px;top:149.8px;">ZF 1  PF 1  AF 0</div><div class="m r" style="left:7px;top:161.8px;">OF 0  SF 0  DF 0</div><div class="m r" style="left:7px;top:173.8px;">CF 0  TF 0  IF 1</div><div class="m r" style="left:7px;top:197.8px;">LastError  00000000 (ERROR_SUCCESS)</div><div class="m r" style="left:7px;top:209.8px;">LastStatus C0000008 (STATUS_INVALID_PARAMETER)</div><div class="m r" style="left:7px;top:233.8px;">GS 0000  FS 003B</div><div class="m r" style="left:7px;top:245.8px;">ES 0023  DS 0023</div><div class="m r" style="left:7px;top:257.8px;">CS 001B  SS 0023</div><div class="m r" style="left:7px;top:281.8px;">ST(0) FFFF00000000FF354963 x87r0</div><div class="cj" style="left:238px;top:280px;font-size:11px;line-height:11px">非</div><div class="m r" style="left:7px;top:293.8px;">ST(1) FFFF00000000FF354963 x87r1</div><div class="cj" style="left:238px;top:292px;font-size:11px;line-height:11px">非</div><div class="m r" style="left:7px;top:305.8px;">ST(2) FFFF0000000000000000 x87r2</div><div class="cj" style="left:238px;top:304px;font-size:11px;line-height:11px">非</div><div class="m r" style="left:7px;top:317.8px;">ST(3) FFFF0000000000000000 x87r3</div><div class="cj" style="left:238px;top:316px;font-size:11px;line-height:11px">非</div><div class="m r" style="left:7px;top:329.8px;">ST(4) FFFFFF354963FF354963 x87r4</div><div class="cj" style="left:238px;top:328px;font-size:11px;line-height:11px">非</div><div class="m r" style="left:7px;top:341.8px;">ST(5) FFFF0000000000000000 x87r5</div><div class="cj" style="left:238px;top:340px;font-size:11px;line-height:11px">非</div><div class="m r" style="left:7px;top:353.8px;">ST(6) FFFF0000000000000000 x87r6</div><div class="cj" style="left:238px;top:352px;font-size:11px;line-height:11px">非</div><div class="m r" style="left:7px;top:365.8px;">ST(7) 00000000000000000000 x87r7</div><div class="cj" style="left:238px;top:364px;font-size:11px;line-height:11px">非</div></div><div style="left:1079px;top:225px;width:14px;height:2px;background:#008000"></div><div class="th" style="left:1072px;top:439px;width:242px;height:17px;"></div><div style="left:1071px;top:440px;width:16px;height:15px;background:#fff;border-radius:2px"></div><div style="left:1072px;top:455px;width:14px;height:1px;background:#8AA8E0"></div><div style="left:1072px;top:441px;width:14px;height:13px;background:linear-gradient(135deg,#CBDAFD,#BFD0FA 50%,#B1C6F6);border-radius:1.5px"></div><svg class="a" style="left:1072px;top:441px" width="14" height="13"><path d="M9 2.5L5 6.5l4 4" fill="none" stroke="#4D6185" stroke-width="2.2"/></svg><div style="left:1088px;top:440px;width:242px;height:15px;background:#fff;border-radius:2px"></div><div style="left:1089px;top:441px;width:240px;height:13px;background:linear-gradient(135deg,#CBDAFD,#BFD0FA 50%,#B1C6F6);border-radius:1.5px"></div><div style="left:1201px;top:444px;width:1px;height:6px;background:#EEF4FE"></div><div style="left:1202px;top:445px;width:1px;height:6px;background:#8CB0F8"></div><div style="left:1203px;top:444px;width:1px;height:6px;background:#EEF4FE"></div><div style="left:1204px;top:445px;width:1px;height:6px;background:#8CB0F8"></div><div style="left:1205px;top:444px;width:1px;height:6px;background:#EEF4FE"></div><div style="left:1206px;top:445px;width:1px;height:6px;background:#8CB0F8"></div><div style="left:1207px;top:444px;width:1px;height:6px;background:#EEF4FE"></div><div style="left:1208px;top:445px;width:1px;height:6px;background:#8CB0F8"></div><div style="left:1071px;top:456px;width:260px;height:20px;background:#FFFFFF;border:1px solid #7F9DB9"></div><div class="cj" style="left:1074px;top:460.5px">默认</div><div class="ui" style="left:1104px;top:461px;">(stdcall)</div><div style="left:1071px;top:476px;width:260px;height:95px;background:#FFF8F0;border:1px solid #7F9DB9;border-top:none"></div><div style="left:1072px;top:477px;width:242px;height:11px;background:#C0C0C0"></div><div class="m" style="left:1076px;top:477.8px;">1: [esp+4] 00000000</div><div class="m" style="left:1076px;top:488.8px;">2: [esp+8] FFFF037F</div><div class="m" style="left:1076px;top:499.8px;">3: [esp+C] 014D10F0</div><div class="m" style="left:1076px;top:510.8px;">4: [esp+10] 00123DD0</div><div class="m" style="left:1076px;top:521.8px;">5: [esp+14] 30F4CCB1 mso.30F4CCB1</div><div class="tab" style="left:93px;top:574px;width:79px;height:22px;"></div><div class="cj" style="left:125px;top:578.3px">内存</div><div class="ui" style="left:154.5px;top:579px;font:12px/12px 'Liberation Serif',serif">2</div><div class="tab" style="left:173px;top:574px;width:79px;height:22px;"></div><div class="cj" style="left:205px;top:578.3px">内存</div><div class="ui" style="left:234.5px;top:579px;font:12px/12px 'Liberation Serif',serif">3</div><div class="tab" style="left:253px;top:574px;width:79px;height:22px;"></div><div class="cj" style="left:285px;top:578.3px">内存</div><div class="ui" style="left:314.5px;top:579px;font:12px/12px 'Liberation Serif',serif">4</div><div class="tab" style="left:333px;top:574px;width:79px;height:22px;"></div><div class="cj" style="left:365px;top:578.3px">内存</div><div class="ui" style="left:394.5px;top:579px;font:12px/12px 'Liberation Serif',serif">5</div><div class="tab" style="left:413px;top:574px;width:79px;height:22px;"></div><div class="cj" style="left:445px;top:578.3px">监视</div><div class="ui" style="left:475px;top:579px;font:12px/12px 'Liberation Serif',serif">1</div><div class="tab" style="left:493px;top:574px;width:91px;height:22px;"></div><div class="cj" style="left:525px;top:578.3px">局部变量</div><div class="tab" style="left:585px;top:574px;width:77px;height:22px;"></div><div class="cj" style="left:616.5px;top:578.3px">结构体</div><div class="tabs" style="left:13px;top:572px;width:82px;height:24px;"></div><div class="cj" style="left:45.3px;top:577.3px">内存</div><div class="ui" style="left:74.5px;top:578px;font:12px/12px 'Liberation Serif',serif">1</div><svg class="a" style="left:25px;top:577px" width="17" height="14" viewBox="0 0 17 14"><ellipse cx="8.5" cy="12.6" rx="7.6" ry="1" fill="#D8D8D8"/><rect x="4.8" y=".3" width="11" height="10" rx="1.6" fill="#E4E6EA" stroke="#A8A8A8" stroke-width=".6"/><path d="M8.4 .8v9.2M11.7 .8v9.2" stroke="#8C8C8C" stroke-width="1.1"/><path d="M6.4 1v9M9.9 1v9M13.6 1v9" stroke="#F8F8F8" stroke-width="1.2"/><path d="M13 4v6h2.6V4z" fill="#C4DCC8" opacity=".6"/><rect x=".2" y="2.2" width="4.8" height="8.2" rx=".8" fill="#F6B81E" stroke="#D89A10" stroke-width=".5"/><rect x=".2" y="4" width="2.6" height="3.2" fill="#3E7ACC"/><path d="M4.6 10.4h8" stroke="#666" stroke-width="1"/><circle cx="3.1" cy="11.2" r="1.9" fill="#2A1818"/><circle cx="12.8" cy="11.2" r="1.9" fill="#2A1818"/><circle cx="3.1" cy="11.2" r=".8" fill="#B8B8B8"/><circle cx="12.8" cy="11.2" r=".8" fill="#B8B8B8"/></svg><svg class="a" style="left:105px;top:578px" width="17" height="14" viewBox="0 0 17 14"><ellipse cx="8.5" cy="12.6" rx="7.6" ry="1" fill="#D8D8D8"/><rect x="4.8" y=".3" width="11" height="10" rx="1.6" fill="#E4E6EA" stroke="#A8A8A8" stroke-width=".6"/><path d="M8.4 .8v9.2M11.7 .8v9.2" stroke="#8C8C8C" stroke-width="1.1"/><path d="M6.4 1v9M9.9 1v9M13.6 1v9" stroke="#F8F8F8" stroke-width="1.2"/><path d="M13 4v6h2.6V4z" fill="#C4DCC8" opacity=".6"/><rect x=".2" y="2.2" width="4.8" height="8.2" rx=".8" fill="#F6B81E" stroke="#D89A10" stroke-width=".5"/><rect x=".2" y="4" width="2.6" height="3.2" fill="#3E7ACC"/><path d="M4.6 10.4h8" stroke="#666" stroke-width="1"/><circle cx="3.1" cy="11.2" r="1.9" fill="#2A1818"/><circle cx="12.8" cy="11.2" r="1.9" fill="#2A1818"/><circle cx="3.1" cy="11.2" r=".8" fill="#B8B8B8"/><circle cx="12.8" cy="11.2" r=".8" fill="#B8B8B8"/></svg><svg class="a" style="left:185px;top:578px" width="17" height="14" viewBox="0 0 17 14"><ellipse cx="8.5" cy="12.6" rx="7.6" ry="1" fill="#D8D8D8"/><rect x="4.8" y=".3" width="11" height="10" rx="1.6" fill="#E4E6EA" stroke="#A8A8A8" stroke-width=".6"/><path d="M8.4 .8v9.2M11.7 .8v9.2" stroke="#8C8C8C" stroke-width="1.1"/><path d="M6.4 1v9M9.9 1v9M13.6 1v9" stroke="#F8F8F8" stroke-width="1.2"/><path d="M13 4v6h2.6V4z" fill="#C4DCC8" opacity=".6"/><rect x=".2" y="2.2" width="4.8" height="8.2" rx=".8" fill="#F6B81E" stroke="#D89A10" stroke-width=".5"/><rect x=".2" y="4" width="2.6" height="3.2" fill="#3E7ACC"/><path d="M4.6 10.4h8" stroke="#666" stroke-width="1"/><circle cx="3.1" cy="11.2" r="1.9" fill="#2A1818"/><circle cx="12.8" cy="11.2" r="1.9" fill="#2A1818"/><circle cx="3.1" cy="11.2" r=".8" fill="#B8B8B8"/><circle cx="12.8" cy="11.2" r=".8" fill="#B8B8B8"/></svg><svg class="a" style="left:265px;top:578px" width="17" height="14" viewBox="0 0 17 14"><ellipse cx="8.5" cy="12.6" rx="7.6" ry="1" fill="#D8D8D8"/><rect x="4.8" y=".3" width="11" height="10" rx="1.6" fill="#E4E6EA" stroke="#A8A8A8" stroke-width=".6"/><path d="M8.4 .8v9.2M11.7 .8v9.2" stroke="#8C8C8C" stroke-width="1.1"/><path d="M6.4 1v9M9.9 1v9M13.6 1v9" stroke="#F8F8F8" stroke-width="1.2"/><path d="M13 4v6h2.6V4z" fill="#C4DCC8" opacity=".6"/><rect x=".2" y="2.2" width="4.8" height="8.2" rx=".8" fill="#F6B81E" stroke="#D89A10" stroke-width=".5"/><rect x=".2" y="4" width="2.6" height="3.2" fill="#3E7ACC"/><path d="M4.6 10.4h8" stroke="#666" stroke-width="1"/><circle cx="3.1" cy="11.2" r="1.9" fill="#2A1818"/><circle cx="12.8" cy="11.2" r="1.9" fill="#2A1818"/><circle cx="3.1" cy="11.2" r=".8" fill="#B8B8B8"/><circle cx="12.8" cy="11.2" r=".8" fill="#B8B8B8"/></svg><svg class="a" style="left:345px;top:578px" width="17" height="14" viewBox="0 0 17 14"><ellipse cx="8.5" cy="12.6" rx="7.6" ry="1" fill="#D8D8D8"/><rect x="4.8" y=".3" width="11" height="10" rx="1.6" fill="#E4E6EA" stroke="#A8A8A8" stroke-width=".6"/><path d="M8.4 .8v9.2M11.7 .8v9.2" stroke="#8C8C8C" stroke-width="1.1"/><path d="M6.4 1v9M9.9 1v9M13.6 1v9" stroke="#F8F8F8" stroke-width="1.2"/><path d="M13 4v6h2.6V4z" fill="#C4DCC8" opacity=".6"/><rect x=".2" y="2.2" width="4.8" height="8.2" rx=".8" fill="#F6B81E" stroke="#D89A10" stroke-width=".5"/><rect x=".2" y="4" width="2.6" height="3.2" fill="#3E7ACC"/><path d="M4.6 10.4h8" stroke="#666" stroke-width="1"/><circle cx="3.1" cy="11.2" r="1.9" fill="#2A1818"/><circle cx="12.8" cy="11.2" r="1.9" fill="#2A1818"/><circle cx="3.1" cy="11.2" r=".8" fill="#B8B8B8"/><circle cx="12.8" cy="11.2" r=".8" fill="#B8B8B8"/></svg><svg class="a" style="left:425px;top:577px" width="15" height="15" viewBox="0 0 15 15"><ellipse cx="7.5" cy="13.4" rx="5.6" ry=".8" fill="#DAD8D0"/><ellipse cx="3.2" cy="3.4" rx="2.7" ry="3.2" fill="#C8843C"/><ellipse cx="11.800" cy="3.4" rx="2.7" ry="3.2" fill="#C8843C"/><ellipse cx="3.4" cy="3.800" rx="1.4" ry="2" fill="#F0D0A0"/><ellipse cx="11.600" cy="3.800" rx="1.4" ry="2" fill="#F0D0A0"/><ellipse cx="7.5" cy="8.200" rx="7.300" ry="5.600" fill="#DC9C50"/><ellipse cx="7.5" cy="10.800" rx="3.800" ry="2.700" fill="#FAE8CC"/><ellipse cx="2.600" cy="9.800" rx="1.800" ry="2" fill="#F2D4A4"/><ellipse cx="12.400" cy="9.800" rx="1.800" ry="2" fill="#F2D4A4"/><ellipse cx="5.200" cy="8" rx=".8" ry="1.100" fill="#201820"/><ellipse cx="9.800" cy="8" rx=".8" ry="1.100" fill="#201820"/><ellipse cx="7.5" cy="10.800" rx="1.300" ry=".9" fill="#201820"/></svg><svg class="a" style="left:503px;top:578px" width="20" height="14"><g font-family="Liberation Serif" font-size="12.500"><text x="1.400" y="11" fill="#303030">[</text><text x="4.200" y="10.600" fill="#A03030" font-style="italic" font-weight="bold">x</text><text x="9.700" y="10.800" fill="#707070" font-size="11">=</text><text x="14.600" y="11" fill="#303030">]</text></g></svg><svg class="a" style="left:598px;top:576px" width="14" height="16" viewBox="0 0 14 16"><ellipse cx="5" cy="15.200" rx="4" ry=".7" fill="#DAD8D0"/><path d="M2.300 14.300L11.300 6.100A3.300 3.300 0 1 0 4.900 4.800" fill="none" stroke="#E23636" stroke-width="2.700" stroke-linecap="round"/><path d="M2.300 14.300L11.300 6.100A3.300 3.300 0 1 0 4.900 4.800" fill="none" stroke="#fff" stroke-width="2.100" stroke-dasharray="1.500 1.900"/></svg><div style="left:13px;top:596px;width:956px;height:180px;background:#FFF8F0;border:1px solid #7F9DB9"></div><div style="left:14px;top:597px;width:936px;height:15px;background:#C0C0C0;border-bottom:2px solid #808080"></div><div style="left:950px;top:597px;width:1px;height:180px;background:#808080"></div><div style="left:76px;top:598px;width:2px;height:13px;background:#808080"></div><div style="left:413px;top:598px;width:2px;height:13px;background:#808080"></div><div style="left:533px;top:598px;width:2px;height:13px;background:#808080"></div><div class="cj" style="left:18px;top:599px;font-size:11px;line-height:11px">地址</div><div class="cj" style="left:83px;top:599px;font-size:11px;line-height:11px">十六进制</div><div class="m" style="left:419px;top:599.8px;">ASCII</div><div style="left:77px;top:611px;width:1px;height:162px;background:#808080"></div><div style="left:414px;top:611px;width:1px;height:162px;background:#808080"></div><div style="left:534px;top:611px;width:1px;height:162px;background:#808080"></div><div style="left:162px;top:611px;width:1px;height:162px;background:#A0A0A0"></div><div style="left:246px;top:611px;width:1px;height:162px;background:#A0A0A0"></div><div style="left:330px;top:611px;width:1px;height:162px;background:#A0A0A0"></div><div style="left:78px;top:612px;width:21px;height:11px;background:#C0C0C0"></div><div style="left:419px;top:612px;width:7px;height:11px;background:#C0C0C0"></div><div class="m" style="left:18px;top:612.8px;">7C920000</div><div class="m" style="left:83px;top:612.8px;"><span class="p">4D</span> <span class="p">5A</span> 90 <span class="z">00</span> 03 <span class="z">00</span> <span class="z">00</span> <span class="z">00</span> 04 <span class="z">00</span> <span class="z">00</span> <span class="z">00</span> <span class="f">FF</span> <span class="f">FF</span> <span class="z">00</span> <span class="z">00</span></div><div class="m" style="left:419px;top:612.8px;"><span class="p">MZ</span>.<span class="z">.</span>.<span class="z">...</span>.<span class="z">...</span><span class="f">ÿÿ</span><span class="z">..</span></div><div class="m" style="left:18px;top:623.8px;">7C920010</div><div class="m" style="left:83px;top:623.8px;">B8 <span class="z">00</span> <span class="z">00</span> <span class="z">00</span> <span class="z">00</span> <span class="z">00</span> <span class="z">00</span> <span class="z">00</span> <span class="p">40</span> <span class="z">00</span> <span class="z">00</span> <span class="z">00</span> <span class="z">00</span> <span class="z">00</span> <span class="z">00</span> <span class="z">00</span></div><div class="m" style="left:419px;top:623.8px;">¸<span class="z">.......</span><span class="p">@</span><span class="z">.......</span></div><div class="m" style="left:18px;top:634.8px;">7C920020</div><div class="m" style="left:83px;top:634.8px;"><span class="z">00</span> <span class="z">00</span> <span class="z">00</span> <span class="z">00</span> <span class="z">00</span> <span class="z">00</span> <span class="z">00</span> <span class="z">00</span> <span class="z">00</span> <span class="z">00</span> <span class="z">00</span> <span class="z">00</span> <span class="z">00</span> <span class="z">00</span> <span class="z">00</span> <span class="z">00</span></div><div class="m" style="left:419px;top:634.8px;"><span class="z">................</span></div><div class="m" style="left:18px;top:645.8px;">7C920030</div><div class="m" style="left:83px;top:645.8px;"><span class="z">00</span> <span class="z">00</span> <span class="z">00</span> <span class="z">00</span> <span class="z">00</span> <span class="z">00</span> <span class="z">00</span> <span class="z">00</span> <span class="z">00</span> <span class="z">00</span> <span class="z">00</span> <span class="z">00</span> E0 <span class="z">00</span> <span class="z">00</span> <span class="z">00</span></div><div class="m" style="left:419px;top:645.8px;"><span class="z">............</span>à<span class="z">...</span></div><div class="m" style="left:18px;top:656.8px;">7C920040</div><div class="m" style="left:83px;top:656.8px;">0E 1F BA 0E <span class="z">00</span> B4 <span class="p">09</span> CD <span class="p">21</span> B8 01 <span class="p">4C</span> CD <span class="p">21</span> <span class="p">54</span> <span class="p">68</span></div><div class="m" style="left:419px;top:656.8px;">..º.<span class="z">.</span>´<span class="p">.</span>Í<span class="p">!</span>¸.<span class="p">L</span>Í<span class="p">!Th</span></div><div class="m" style="left:18px;top:667.8px;">7C920050</div><div class="m" style="left:83px;top:667.8px;"><span class="p">69</span> <span class="p">73</span> <span class="p">20</span> <span class="p">70</span> <span class="p">72</span> <span class="p">6F</span> <span class="p">67</span> <span class="p">72</span> <span class="p">61</span> <span class="p">6D</span> <span class="p">20</span> <span class="p">63</span> <span class="p">61</span> <span class="p">6E</span> <span class="p">6E</span> <span class="p">6F</span></div><div class="m" style="left:419px;top:667.8px;"><span class="p">is program canno</span></div><div class="m" style="left:18px;top:678.8px;">7C920060</div><div class="m" style="left:83px;top:678.8px;"><span class="p">74</span> <span class="p">20</span> <span class="p">62</span> <span class="p">65</span> <span class="p">20</span> <span class="p">72</span> <span class="p">75</span> <span class="p">6E</span> <span class="p">20</span> <span class="p">69</span> <span class="p">6E</span> <span class="p">20</span> <span class="p">44</span> <span class="p">4F</span> <span class="p">53</span> <span class="p">20</span></div><div class="m" style="left:419px;top:678.8px;"><span class="p">t be run in DOS </span></div><div class="m" style="left:18px;top:689.8px;">7C920070</div><div class="m" style="left:83px;top:689.8px;"><span class="p">6D</span> <span class="p">6F</span> <span class="p">64</span> <span class="p">65</span> <span class="p">2E</span> <span class="p">0D</span> <span class="p">0D</span> <span class="p">0A</span> <span class="p">24</span> <span class="z">00</span> <span class="z">00</span> <span class="z">00</span> <span class="z">00</span> <span class="z">00</span> <span class="z">00</span> <span class="z">00</span></div><div class="m" style="left:419px;top:689.8px;"><span class="p">mode....$</span><span class="z">.......</span></div><div class="m" style="left:18px;top:700.8px;">7C920080</div><div class="m" style="left:83px;top:700.8px;">08 <span class="p">40</span> <span class="p">63</span> FE <span class="p">4C</span> <span class="p">21</span> <span class="p">0D</span> AD <span class="p">4C</span> <span class="p">21</span> <span class="p">0D</span> AD <span class="p">4C</span> <span class="p">21</span> <span class="p">0D</span> AD</div><div class="m" style="left:419px;top:700.8px;">.<span class="p">@c</span>þ<span class="p">L!.</span>.<span class="p">L!.</span>.<span class="p">L!.</span>.</div><div class="m" style="left:18px;top:711.8px;">7C920090</div><div class="m" style="left:83px;top:711.8px;">8F <span class="p">2E</span> <span class="p">51</span> AD <span class="p">4D</span> <span class="p">21</span> <span class="p">0D</span> AD 8F <span class="p">2E</span> <span class="p">53</span> AD <span class="p">4D</span> <span class="p">21</span> <span class="p">0D</span> AD</div><div class="m" style="left:419px;top:711.8px;">.<span class="p">.Q</span>.<span class="p">M!.</span>..<span class="p">.S</span>.<span class="p">M!.</span>.</div><div class="m" style="left:18px;top:722.8px;">7C9200A0</div><div class="m" style="left:83px;top:722.8px;">8F <span class="p">2E</span> 02 AD <span class="p">0C</span> <span class="p">21</span> <span class="p">0D</span> AD 8F <span class="p">2E</span> <span class="p">6D</span> AD <span class="p">4F</span> <span class="p">21</span> <span class="p">0D</span> AD</div><div class="m" style="left:419px;top:722.8px;">.<span class="p">.</span>..<span class="p">.!.</span>..<span class="p">.m</span>.<span class="p">O!.</span>.</div><div class="m" style="left:18px;top:733.8px;">7C9200B0</div><div class="m" style="left:83px;top:733.8px;">8F <span class="p">2E</span> <span class="p">52</span> AD 9D <span class="p">21</span> <span class="p">0D</span> AD 8F <span class="p">2E</span> <span class="p">57</span> AD <span class="p">4D</span> <span class="p">21</span> <span class="p">0D</span> AD</div><div class="m" style="left:419px;top:733.8px;">.<span class="p">.R</span>..<span class="p">!.</span>..<span class="p">.W</span>.<span class="p">M!.</span>.</div><div class="m" style="left:18px;top:744.8px;">7C9200C0</div><div class="m" style="left:83px;top:744.8px;"><span class="p">52</span> <span class="p">69</span> <span class="p">63</span> <span class="p">68</span> <span class="p">4C</span> <span class="p">21</span> <span class="p">0D</span> AD <span class="z">00</span> <span class="z">00</span> <span class="z">00</span> <span class="z">00</span> <span class="z">00</span> <span class="z">00</span> <span class="z">00</span> <span class="z">00</span></div><div class="m" style="left:419px;top:744.8px;"><span class="p">RichL!.</span>.<span class="z">........</span></div><div class="m" style="left:18px;top:755.8px;">7C9200D0</div><div class="m" style="left:83px;top:755.8px;"><span class="z">00</span> <span class="z">00</span> <span class="z">00</span> <span class="z">00</span> <span class="z">00</span> <span class="z">00</span> <span class="z">00</span> <span class="z">00</span> <span class="z">00</span> <span class="z">00</span> <span class="z">00</span> <span class="z">00</span> <span class="z">00</span> <span class="z">00</span> <span class="z">00</span> <span class="z">00</span></div><div class="m" style="left:419px;top:755.8px;"><span class="z">................</span></div><div class="m" style="left:18px;top:766.8px;">7C9200E0</div><div class="m" style="left:83px;top:766.8px;"><span class="p">50</span> <span class="p">45</span> <span class="z">00</span> <span class="z">00</span> <span class="p">4C</span> 01 04 <span class="z">00</span> C5 BD 02 <span class="p">48</span> <span class="z">00</span> <span class="z">00</span> <span class="z">00</span> <span class="z">00</span></div><div class="m" style="left:419px;top:766.8px;"><span class="p">PE</span><span class="z">..</span><span class="p">L</span>..<span class="z">.</span>Å½.<span class="p">H</span><span class="z">....</span></div><div style="left:167px;top:698px;width:77px;height:2px;background:#000080"></div><div class="tv" style="left:951px;top:597px;width:17px;height:180px;"></div><div style="left:952px;top:597px;width:15px;height:16px;background:#fff;border-radius:2px"></div><div style="left:953px;top:613px;width:13px;height:1px;background:#8AA8E0"></div><div style="left:953px;top:598px;width:13px;height:14px;background:linear-gradient(135deg,#CBDAFD,#BFD0FA 50%,#B1C6F6);border-radius:1.5px"></div><svg class="a" style="left:953px;top:598px" width="13" height="14"><path d="M2.5 9L6.5 5l4 4" fill="none" stroke="#4D6185" stroke-width="2.2"/></svg><div style="left:952px;top:614px;width:15px;height:9px;background:#fff;border-radius:2px"></div><div style="left:953px;top:623px;width:13px;height:1px;background:#8AA8E0"></div><div style="left:953px;top:615px;width:13px;height:7px;background:linear-gradient(135deg,#CBDAFD,#BFD0FA 50%,#B1C6F6);border-radius:1.5px"></div><div style="left:969px;top:570px;width:360px;height:210px;background:#FFF8F0;border:1px solid #7F9DB9"></div><div style="left:970px;top:572px;width:144px;height:11.5px;background:#000"></div><div style="left:1114px;top:572px;width:200px;height:11.5px;background:#C0C0C0"></div><div style="left:1113px;top:573px;width:1px;height:200px;background:#808080"></div><div style="left:1179px;top:573px;width:1px;height:200px;background:#808080"></div><div class="m" style="left:975px;top:573.8px;color:#fff">$-44</div><div class="m" style="left:1038px;top:573.8px;color:#fff">00123D8C</div><div class="m" style="left:1118px;top:573.8px;">05000000</div><div class="m" style="left:975px;top:584.8px;color:#808080">$-40</div><div class="m" style="left:1038px;top:584.8px;color:#808080">00123D90</div><div class="m" style="left:1118px;top:584.8px;">00000000</div><div class="m" style="left:975px;top:595.8px;color:#808080">$-3C</div><div class="m" style="left:1038px;top:595.8px;color:#808080">00123D94</div><div class="m" style="left:1118px;top:595.8px;">FFFF037F</div><div class="m" style="left:975px;top:606.8px;color:#808080">$-38</div><div class="m" style="left:1038px;top:606.8px;color:#808080">00123D98</div><div class="m" style="left:1118px;top:606.8px;">014D10F0</div><div class="m" style="left:975px;top:617.8px;color:#808080">$-34</div><div class="m" style="left:1038px;top:617.8px;color:#808080">00123D9C</div><div class="m" style="left:1118px;top:617.8px;">00123DD0</div><div class="m" style="left:975px;top:628.8px;color:#808080">$-30</div><div class="m" style="left:1038px;top:628.8px;color:#808080">00123DA0</div><div class="m" style="left:1121px;top:628.8px;">30F4CCB1</div><div class="m" style="left:975px;top:639.8px;color:#808080">$-2C</div><div class="m" style="left:1038px;top:639.8px;color:#808080">00123DA4</div><div class="m" style="left:1121px;top:639.8px;">90909090</div><div class="m" style="left:975px;top:650.8px;color:#808080">$-28</div><div class="m" style="left:1038px;top:650.8px;color:#808080">00123DA8</div><div class="m" style="left:1121px;top:650.8px;">00123DC8</div><div class="m" style="left:975px;top:661.8px;color:#808080">$-24</div><div class="m" style="left:1038px;top:661.8px;color:#808080">00123DAC</div><div class="m" style="left:1121px;top:661.8px;">00000000</div><div class="m" style="left:975px;top:672.8px;color:#808080">$-20</div><div class="m" style="left:1038px;top:672.8px;color:#808080">00123DB0</div><div class="m" style="left:1121px;top:672.8px;">00000000</div><div class="m" style="left:975px;top:683.8px;color:#808080">$-1C</div><div class="m" style="left:1038px;top:683.8px;color:#808080">00123DB4</div><div class="m" style="left:1121px;top:683.8px;">00000000</div><div class="m" style="left:975px;top:694.8px;color:#808080">$-18</div><div class="m" style="left:1038px;top:694.8px;color:#808080">00123DB8</div><div class="m" style="left:1121px;top:694.8px;">00000000</div><div class="m" style="left:975px;top:705.8px;color:#808080">$-14</div><div class="m" style="left:1038px;top:705.8px;color:#808080">00123DBC</div><div class="m" style="left:1121px;top:705.8px;">0000FF35</div><div class="m" style="left:975px;top:716.8px;color:#808080">$-10</div><div class="m" style="left:1038px;top:716.8px;color:#808080">00123DC0</div><div class="m" style="left:1121px;top:716.8px;">90909090</div><div class="m" style="left:975px;top:727.8px;color:#808080">$-C</div><div class="m" style="left:1038px;top:727.8px;color:#808080">00123DC4</div><div class="m" style="left:1121px;top:727.8px;">90909090</div><div class="m" style="left:975px;top:738.8px;color:#808080">$-8</div><div class="m" style="left:1038px;top:738.8px;color:#808080">00123DC8</div><div class="m" style="left:1121px;top:738.8px;">00000000</div><div class="m" style="left:975px;top:749.8px;color:#808080">$-4</div><div class="m" style="left:1038px;top:749.8px;color:#808080">00123DCC</div><div class="m" style="left:1121px;top:749.8px;">90909090</div><div class="m" style="left:975px;top:760.8px;color:#808080">$</div><div class="m" style="left:1038px;top:760.8px;color:#808080">00123DD0</div><div class="m" style="left:1121px;top:760.8px;">90909090</div><div class="m" style="left:975px;top:771.8px;color:#808080">$+4</div><div class="m" style="left:1038px;top:771.8px;color:#808080">00123DD4</div><div class="m" style="left:1118px;top:771.8px;">90909090</div><svg class="a" style="left:988px;top:760px" width="22" height="11"><path d="M1 4.300H16.500M1 6.700H16.500" stroke="#808080" stroke-width=".9"/><path d="M15 1.800L19.600 5.500L15 9.200" fill="none" stroke="#808080" stroke-width="1"/></svg><svg class="a" style="left:1114px;top:573px" width="8" height="200"><path d="M6 56H2V194H6" fill="none" stroke="#000" stroke-width="2"/><path d="M6 200H2V210" fill="none" stroke="#000" stroke-width="2"/></svg><div class="cj" style="left:1185px;top:628px;font-size:11px;line-height:11px;color:#F00">返回到</div><div class="m" style="left:1224px;top:628.8px;color:#F00">mso.30F4CCB1</div><div class="cj" style="left:1185px;top:639px;font-size:11px;line-height:11px;color:#F00">返回到</div><div class="m" style="left:1224px;top:639.8px;color:#F00">90909090</div><div class="cj" style="left:1290px;top:639px;font-size:11px;line-height:11px;color:#F00">自</div><div class="m" style="left:1309px;top:639.8px;color:#F00">90</div></body></html>
